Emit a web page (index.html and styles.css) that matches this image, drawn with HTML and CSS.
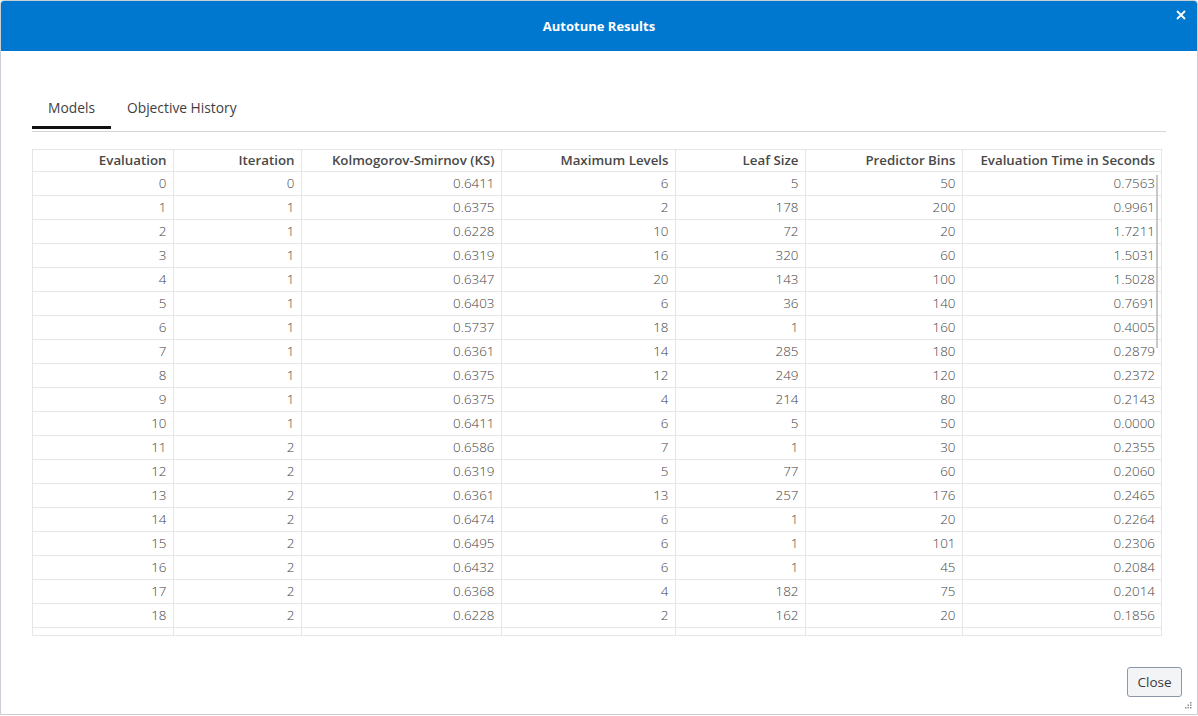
FILE: index.html
```html
<!DOCTYPE html>
<html>
<head>
<meta charset="utf-8">
<link rel="stylesheet" href="styles.css">
</head>
<body>
<div class="dialog">
  <div class="titlebar">
    <span class="title">Autotune Results</span>
    <button class="x" aria-label="Close">
      <svg width="10" height="10" viewBox="0 0 10 10"><path d="M1 1L9 9M9 1L1 9" stroke="#fff" stroke-width="1.8" fill="none"/></svg>
    </button>
  </div>
  <div class="body">
    <div class="tabs">
      <div class="tab active">Models</div>
      <div class="tab">Objective History</div>
    </div>
    <div class="tablewrap">
      <table class="grid">
        <colgroup>
          <col style="width:140px"><col style="width:128px"><col style="width:200px"><col style="width:174px"><col style="width:130px"><col style="width:157px"><col style="width:199px">
        </colgroup>
        <thead>
          <tr><th>Evaluation</th><th>Iteration</th><th>Kolmogorov-Smirnov (KS)</th><th>Maximum Levels</th><th>Leaf Size</th><th>Predictor Bins</th><th>Evaluation Time in Seconds</th></tr>
        </thead>
        <tbody>
          <tr><td>0</td><td>0</td><td>0.6411</td><td>6</td><td>5</td><td>50</td><td>0.7563</td></tr>
          <tr><td>1</td><td>1</td><td>0.6375</td><td>2</td><td>178</td><td>200</td><td>0.9961</td></tr>
          <tr><td>2</td><td>1</td><td>0.6228</td><td>10</td><td>72</td><td>20</td><td>1.7211</td></tr>
          <tr><td>3</td><td>1</td><td>0.6319</td><td>16</td><td>320</td><td>60</td><td>1.5031</td></tr>
          <tr><td>4</td><td>1</td><td>0.6347</td><td>20</td><td>143</td><td>100</td><td>1.5028</td></tr>
          <tr><td>5</td><td>1</td><td>0.6403</td><td>6</td><td>36</td><td>140</td><td>0.7691</td></tr>
          <tr><td>6</td><td>1</td><td>0.5737</td><td>18</td><td>1</td><td>160</td><td>0.4005</td></tr>
          <tr><td>7</td><td>1</td><td>0.6361</td><td>14</td><td>285</td><td>180</td><td>0.2879</td></tr>
          <tr><td>8</td><td>1</td><td>0.6375</td><td>12</td><td>249</td><td>120</td><td>0.2372</td></tr>
          <tr><td>9</td><td>1</td><td>0.6375</td><td>4</td><td>214</td><td>80</td><td>0.2143</td></tr>
          <tr><td>10</td><td>1</td><td>0.6411</td><td>6</td><td>5</td><td>50</td><td>0.0000</td></tr>
          <tr><td>11</td><td>2</td><td>0.6586</td><td>7</td><td>1</td><td>30</td><td>0.2355</td></tr>
          <tr><td>12</td><td>2</td><td>0.6319</td><td>5</td><td>77</td><td>60</td><td>0.2060</td></tr>
          <tr><td>13</td><td>2</td><td>0.6361</td><td>13</td><td>257</td><td>176</td><td>0.2465</td></tr>
          <tr><td>14</td><td>2</td><td>0.6474</td><td>6</td><td>1</td><td>20</td><td>0.2264</td></tr>
          <tr><td>15</td><td>2</td><td>0.6495</td><td>6</td><td>1</td><td>101</td><td>0.2306</td></tr>
          <tr><td>16</td><td>2</td><td>0.6432</td><td>6</td><td>1</td><td>45</td><td>0.2084</td></tr>
          <tr><td>17</td><td>2</td><td>0.6368</td><td>4</td><td>182</td><td>75</td><td>0.2014</td></tr>
          <tr><td>18</td><td>2</td><td>0.6228</td><td>2</td><td>162</td><td>20</td><td>0.1856</td></tr>
          <tr><td>19</td><td>2</td><td>0.6311</td><td>7</td><td>232</td><td>137</td><td>0.2324</td></tr>
          <tr><td>20</td><td>2</td><td>0.6403</td><td>6</td><td>36</td><td>140</td><td>0.2210</td></tr>
        </tbody>
      </table>
      <div class="thumb"></div>
    </div>
  </div>
  <div class="footer">
    <button class="close">Close</button>
    <svg class="grip" width="7" height="7" viewBox="0 0 7 7"><g fill="#8c8c8c"><rect x="5" y="0" width="1.5" height="1.5"/><rect x="2.5" y="2.5" width="1.5" height="1.5"/><rect x="5" y="2.5" width="1.5" height="1.5"/><rect x="0" y="5" width="1.5" height="1.5"/><rect x="2.5" y="5" width="1.5" height="1.5"/><rect x="5" y="5" width="1.5" height="1.5"/></g></svg>
  </div>
</div>
</body>
</html>
```
FILE: styles.css
```css
* { box-sizing: border-box; }
html, body { margin: 0; padding: 0; background: #fff; }
body { font-family: "Open Sans", "Liberation Sans", sans-serif; width: 1198px; height: 716px; overflow: hidden; }
.dialog {
  width: 1198px; height: 715px;
  border: 1px solid #c9cdd4;
  border-radius: 4px 4px 0 0;
  display: flex; flex-direction: column;
  overflow: hidden;
}
.titlebar {
  height: 50px; background: #0078cf;
  display: flex; align-items: center; justify-content: center;
  position: relative; flex: none;
}
.title { color: #fff; font-weight: 700; font-size: 13px; }
.x {
  position: absolute; right: 10px; top: 8px;
  background: none; border: 0; padding: 0; width: 12px; height: 12px;
  display: flex; align-items: center; justify-content: center;
}
.body { flex: 1; padding: 43px 31px 0 31px; display: flex; flex-direction: column; }
.tabs { display: flex; border-bottom: 1px solid #d3d6db; height: 38px; }
.tab { font-size: 13.8px; color: #3f3f3f; padding: 4px 16px 0; height: 33px; }
.tab.active { border-bottom: 3px solid #111; height: 35px; }
.tablewrap {
  margin-top: 17px; height: 487px; width: 1130px;
  border: 1px solid #e6e6e6; overflow: hidden; position: relative;
}
.grid { border-collapse: collapse; table-layout: fixed; width: 1128px; font-size: 13px; }
.grid th, .grid td { text-align: right; padding: 0 6px; white-space: nowrap; border-right: 1px solid #e6e6e6; border-bottom: 1px solid #e6e6e6; }
.grid th:last-child, .grid td:last-child { border-right: 0; }
.grid th { height: 21px; font-weight: 600; font-size: 13.3px; color: #484848; padding-bottom: 1px; }
.grid td { height: 24px; color: #444; font-weight: 300; font-size: 13.4px; }
.thumb { position: absolute; left: 1123px; top: 25px; width: 2px; height: 173px; background: #c8c8c8; }
.footer { height: 50px; flex: none; position: relative; }
.close {
  position: absolute; right: 15px; top: 3px;
  height: 30px; width: 55px;
  border: 1px solid #8d97a8; border-radius: 3px; background: #f3f4f6;
  font-family: inherit; font-size: 13.5px; color: #3a3a3a; padding: 0;
}
.grip { position: absolute; right: 5px; bottom: 5px; }
```
